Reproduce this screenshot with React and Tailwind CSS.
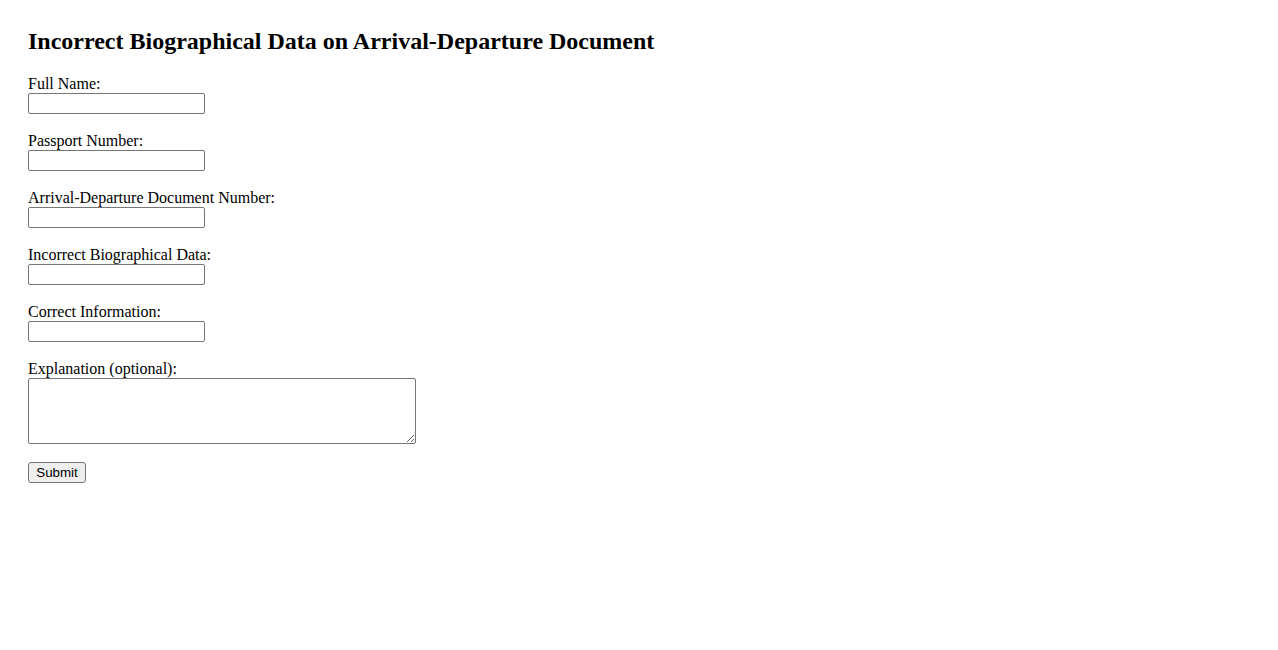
const FIELDS = [
  'Full Name:',
  'Passport Number:',
  'Arrival-Departure Document Number:',
  'Incorrect Biographical Data:',
  'Correct Information:',
];

export default function App() {
  return (
    <div className="min-h-screen bg-white text-black px-[28px] pt-[28px] font-['Liberation_Serif',serif]">
      <h2 className="text-[24px] leading-[27px] font-bold mb-[20px]">
        Incorrect Biographical Data on Arrival-Departure Document
      </h2>
      <form className="flex flex-col items-start" onSubmit={e => e.preventDefault()}>
        {FIELDS.map(label => (
          <div key={label} className="flex flex-col items-start mb-[18px]">
            <label className="text-[16px] leading-[18px]">{label}</label>
            <input
              type="text"
              className="w-[177px] h-[21px] border border-[#767676] rounded-[2px] px-[2px] text-[13.33px] font-['Liberation_Sans',sans-serif] bg-white"
            />
          </div>
        ))}
        <div className="flex flex-col items-start mb-[18px]">
          <label className="text-[16px] leading-[18px]">Explanation (optional):</label>
          <textarea className="w-[388px] h-[66px] border border-[#767676] rounded-[2px] p-[2px] text-[13.33px] font-['Liberation_Mono',monospace] bg-white" />
        </div>
        <button
          type="submit"
          className="w-[58px] h-[21px] border border-[#767676] rounded-[3px] bg-[#efefef] text-[13.33px] leading-[19px] font-['Liberation_Sans',sans-serif]"
        >
          Submit
        </button>
      </form>
    </div>
  );
}
